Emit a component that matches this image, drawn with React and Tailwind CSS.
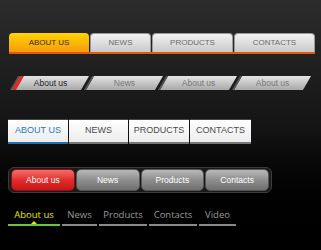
const tabs1 = ['ABOUT US', 'NEWS', 'PRODUCTS', 'CONTACTS']
const tabs2 = ['About us', 'News', 'About us', 'About us']
const tabs3 = ['ABOUT US', 'NEWS', 'PRODUCTS', 'CONTACTS']
const tabs4 = ['About us', 'News', 'Products', 'Contacts']
const tabs5 = ['About us', 'News', 'Products', 'Contacts', 'Video']

function GlossyTabs() {
  const widths = ['w-[80px]', 'w-[61px]', 'w-[81px]', 'w-[81px]']
  return (
    <div className="flex flex-col w-[306px] ml-[9px]">
      <div className="flex gap-[1px] h-[19px]">
        {tabs1.map((t, i) => (
          <div
            key={t}
            className={
              'flex items-center justify-center rounded-t-[4px] text-[8px] ' +
              widths[i] +
              (i === 0
                ? ' bg-gradient-to-b from-[#ffd400] to-[#f79a0c] text-[#3a2a00]'
                : ' bg-gradient-to-b from-[#f2f2f2] to-[#c9c9c9] text-[#6b6b6b] border-x border-t border-[#9a9a9a]')
            }
          >
            {t}
          </div>
        ))}
      </div>
      <div className="h-[2px] bg-[#e05a0a]" />
    </div>
  )
}

function SlantTabs() {
  return (
    <div className="flex gap-[3px] ml-[14px] h-[14px]">
      {tabs2.map((t, i) => (
        <div
          key={i}
          className="relative w-[71px] -skew-x-[30deg] bg-gradient-to-b from-[#e4e4e4] to-[#a9a9a9] border-l-2 border-[#555] flex items-center justify-center overflow-hidden"
        >
          {i === 0 && <div className="absolute left-0 top-0 bottom-0 w-[4px] bg-[#e0291b]" />}
          <span className={'skew-x-[30deg] text-[8.5px] ' + (i === 0 ? 'text-[#222]' : 'text-[#777]')}>{t}</span>
        </div>
      ))}
    </div>
  )
}

function BoxTabs() {
  const widths = ['w-[60px]', 'w-[59px]', 'w-[60px]', 'w-[61px]']
  return (
    <div className="flex gap-[1px] ml-[8px] h-[25px]">
      {tabs3.map((t, i) => (
        <div
          key={t}
          className={
            'flex items-center justify-center bg-gradient-to-b from-[#ffffff] to-[#ececec] text-[9px] border-t border-[#444] border-b-2 ' +
            widths[i] +
            (i === 0 ? ' border-b-[#1f6fb3] text-[#2a76bd]' : ' border-b-[#777] text-[#4a4a4a]')
          }
        >
          {t}
        </div>
      ))}
    </div>
  )
}

function PillTabs() {
  return (
    <div className="ml-[8px] w-[264px] h-[26px] rounded-[6px] bg-[#1a1a1a] border border-[#3c3c3c] flex items-center gap-[1px] px-[2px]">
      {tabs4.map((t, i) => (
        <div
          key={t}
          className={
            'flex-1 h-[22px] rounded-[5px] flex items-center justify-center text-[8.5px] text-white border ' +
            (i === 0
              ? 'bg-gradient-to-b from-[#f36b6b] via-[#e22b2b] to-[#c81616] border-[#8c1010]'
              : 'bg-gradient-to-b from-[#b9b9b9] via-[#8e8e8e] to-[#6f6f6f] border-[#555]')
          }
        >
          {t}
        </div>
      ))}
    </div>
  )
}

function LineTabs() {
  const widths = ['w-[52px]', 'w-[35px]', 'w-[48px]', 'w-[48px]', 'w-[37px]']
  return (
    <div className="flex gap-[2px] ml-[8px]">
      {tabs5.map((t, i) => (
        <div
          key={t}
          className={
            'relative text-center pb-[2px] text-[9.5px] leading-[14px] border-b-2 ' +
            widths[i] +
            (i === 0 ? ' text-[#e8e800] border-[#6fc33a]' : ' text-[#9a9a9a] border-[#8a8a8a]')
          }
        >
          {t}
          {i === 0 && (
            <div className="absolute left-1/2 -translate-x-1/2 bottom-0 w-0 h-0 border-x-[3px] border-x-transparent border-b-[3px] border-b-[#e8e800]" />
          )}
        </div>
      ))}
    </div>
  )
}

export default function App() {
  return (
    <div
      className="w-[321px] h-[250px] overflow-hidden bg-gradient-to-b from-[#2c2c2c] via-[#151515] to-[#000000] flex flex-col pt-[33px]"
      style={{ fontFamily: '"Liberation Sans", Arial, sans-serif' }}
    >
      <GlossyTabs />
      <div className="mt-[22px]"><SlantTabs /></div>
      <div className="mt-[29px]"><BoxTabs /></div>
      <div className="mt-[23px]"><PillTabs /></div>
      <div className="mt-[15px]" style={{ fontFamily: '"Open Sans", sans-serif' }}><LineTabs /></div>
    </div>
  )
}
